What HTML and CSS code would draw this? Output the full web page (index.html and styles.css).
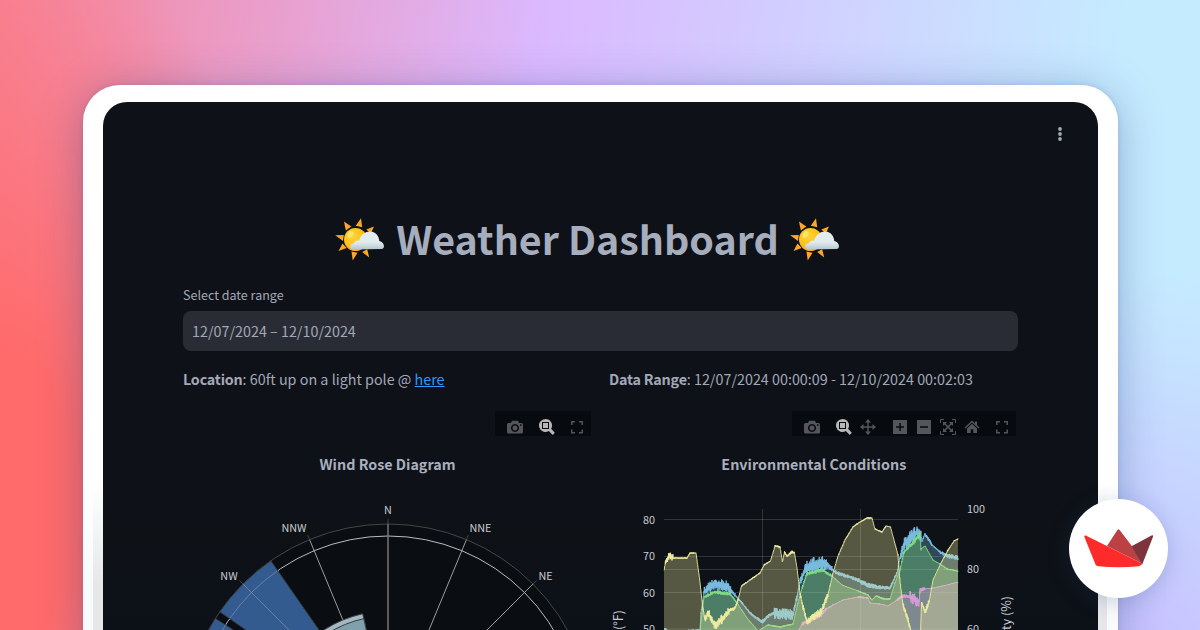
FILE: index.html
```html
<!DOCTYPE html>
<html lang="en">
<head>
<meta charset="utf-8">
<title>Weather Dashboard</title>
<link rel="stylesheet" href="styles.css">
</head>
<body>
<svg class="defs" width="0" height="0" aria-hidden="true">
  <defs>
    <radialGradient id="sunFill" cx=".38" cy=".35" r=".7"><stop offset="0" stop-color="#ffd43b"/><stop offset=".6" stop-color="#fcc21b"/><stop offset="1" stop-color="#ffa21e"/></radialGradient>
    <linearGradient id="cloudFill" x1="0" y1="0" x2="0" y2="1"><stop offset=".6" stop-color="#e2ebee"/><stop offset="1" stop-color="#b4c6cf"/></linearGradient>
    <symbol id="sun" viewBox="0 0 50 44">
      <g fill="#ffa726"><path d="M9 3.500l7.300 5-5.500 4z"/><path d="M26 .2l1.200 9-6.400-1.400z"/><path d="M39 8.500l-3.200 7-4.500-4z"/><path d="M.2 17.200l8.600-.3-.8 6z"/><path d="M3.500 33l4-7.500 4.200 4.500z"/><path d="M17.700 42.500l-1.200-9 6 1.300z"/><path d="M34.200 39.500l-7-5.500 5-2.800z"/></g>
      <circle cx="20.500" cy="21.500" r="11.500" fill="url(#sunFill)"/>
      <ellipse cx="15.500" cy="16.500" rx="2.500" ry="3.800" transform="rotate(35 15.500 16.500)" fill="#ffe36b"/>
      <path d="M19 31.500c-5 0-5.500-5.500-.2-6.200 1-2.700 3.500-3.300 5.200-2.500 1.300-4.800 5-9.300 11-9.300 6.500 0 9 5.500 9.300 9.500 5 1 6.500 7.500 2 8z" fill="url(#cloudFill)"/>
    </symbol>
    <symbol id="camera" viewBox="0 0 16 16"><path fill-rule="evenodd" d="M1.500 4H4l1-2.200h6L12 4h2.500Q16 4 16 5.500V13q0 1.500-1.500 1.500h-13Q0 14.500 0 13V5.500Q0 4 1.500 4zM8 5a4 4 0 1 0 .01 0zM8 6.500a2.500 2.500 0 1 1-.01 0zM13 5.300v1.400h1.500V5.300z"/></symbol>
    <symbol id="zoom" viewBox="0 0 16 16"><path fill-rule="evenodd" d="M6.500 0a6.500 6.500 0 0 1 5.600 9.800l3.700 4-2 2.100-4-3.800A6.500 6.500 0 1 1 6.500 0zM3 3v7h7V3zM4 4h5v5H4z"/></symbol>
    <symbol id="pan" viewBox="0 0 16 16"><path d="M8 0l3 3.500H8.700v3.800h3.800V5L16 8l-3.500 3V8.700H8.700v3.800H11L8 16l-3-3.500h2.300V8.700H3.500V11L0 8l3.500-3v2.300h3.800V3.500H5z"/></symbol>
    <symbol id="plus" viewBox="0 0 16 16"><path fill-rule="evenodd" d="M1 1h14v14H1zM7.300 4v3.300H4v1.500h3.300V12h1.500V8.800H12V7.300H8.800V4z"/></symbol>
    <symbol id="minus" viewBox="0 0 16 16"><path fill-rule="evenodd" d="M1 1h14v14H1zM4 7.300v1.500h8V7.300z"/></symbol>
    <symbol id="autoscale" viewBox="0 0 16 16"><path d="M.5 4V.5H4M12 .5h3.500V4M15.500 12v3.500H12M4 15.500H.5V12" fill="none" stroke="currentColor"/><path d="M4 4l8 8M12 4l-8 8" stroke="currentColor" stroke-width="1.600"/><path d="M3 3h4L3 7zM13 3v4L9 3zM13 13H9l4-4zM3 13V9l4 4z"/></symbol>
    <symbol id="home" viewBox="0 0 16 16"><path d="M8 1.500l3 2.800V2.500h2v3.700l2.500 2.400-1 1L8 3.500 1.500 9.600l-1-1z"/><path d="M8 4.800l5 4.600V14H9.300v-3.700H6.700V14H3V9.400z"/></symbol>
    <symbol id="full" viewBox="0 0 16 16"><path d="M2.800 6V2.800H6M10 2.800h3.200V6M13.200 10.500v3.200H10M6 13.700H2.800v-3.200" fill="none" stroke="currentColor" stroke-width="1.500"/></symbol>
  </defs>
</svg>

<div class="stage">
  <div class="frame">
    <main class="app">
      <header class="topbar">
        <svg class="menu" viewBox="0 0 6 16"><circle cx="3" cy="3" r="1.900"/><circle cx="3" cy="8" r="1.900"/><circle cx="3" cy="13" r="1.900"/></svg>
      </header>
      <h1 class="title"><svg class="sun"><use href="#sun"/></svg><span class="name">Weather Dashboard</span><svg class="sun"><use href="#sun"/></svg></h1>
      <label class="label">Select date range</label>
      <div class="date-input">12/07/2024 – 12/10/2024</div>
      <div class="columns info">
        <p><b>Location</b>: 60ft up on a light pole @ <a class="link">here</a></p>
        <p><b>Data Range</b>: 12/07/2024 00:00:09 - 12/10/2024 00:02:03</p>
      </div>
      <div class="columns">
        <section class="panel">
          <div class="modebar left"><svg class="i"><use href="#camera"/></svg><svg class="i on g16"><use href="#zoom"/></svg><svg class="i g14"><use href="#full"/></svg></div>
          <svg id="rose" class="chart" viewBox="183 436 408 194"></svg>
        </section>
        <section class="panel">
          <div class="modebar right"><svg class="i"><use href="#camera"/></svg><svg class="i on g16"><use href="#zoom"/></svg><svg class="i g8"><use href="#pan"/></svg><svg class="i g16"><use href="#plus"/></svg><svg class="i g8"><use href="#minus"/></svg><svg class="i g8"><use href="#autoscale"/></svg><svg class="i g8"><use href="#home"/></svg><svg class="i g14"><use href="#full"/></svg></div>
          <svg id="env" class="chart" viewBox="609 436 409 194"></svg>
        </section>
      </div>
    </main>
  </div>
  <div class="badge">
    <svg viewBox="0 0 99 99"><path d="M38 47l10.400-16q1.100-1.500 2.200 0L63 47.200 72 64z" fill="#bd4043"/><path d="M62.500 47.300L82.500 36.500q2-.6 1.500 1.300L73 66z" fill="#7d353b"/><path d="M15.300 37.800Q15 36 16.800 36.500L72 64q1.500 1 0 2-.8 1-2.500 1.200-20 2-40 0-2.200-.2-3-1.700z" fill="#ff2b2b"/></svg>
  </div>
</div>
<script src="charts.js"></script>
</body>
</html>
```

FILE: styles.css
```css
* { box-sizing: border-box; }
body { margin: 0; width: 1200px; height: 630px; overflow: hidden; font-family: "Noto Sans CJK SC", "Noto Sans", sans-serif; font-size: 14.33px; color: #a3a8b8; }
.defs { position: absolute; }
.stage {
  position: relative; width: 1200px; height: 630px; overflow: hidden; padding: 85px 82px 0 83px;
  background:
    radial-gradient(ellipse 300px 600px at 0 500px, #ff6b6b 25%, rgba(255,107,107,0) 100%),
    radial-gradient(ellipse 330px 430px at 1130px 700px, #c8c0ff 10%, rgba(200,192,255,0) 100%),
    linear-gradient(100deg, #f7859a 0%, #dbb9ff 42%, #c5ebff 86%);
}
.frame {
  width: 1035px; height: 700px; padding: 17px 20px 0; border-radius: 37px;
  background:
    linear-gradient(#fff 400px, rgba(255,255,255,0) 500px),
    linear-gradient(90deg, #f9fafb 10px, #e5e7e9 10px 1024px, #f9fafb 1024px);
  box-shadow: 0 6px 44px rgba(35,65,125,.34), 0 0 5px rgba(35,65,125,.15);
}
.app { width: 995px; height: 690px; border-radius: 24px 24px 0 0; padding: 0 80px; background: linear-gradient(#0e1117 370px, #0e1217 430px, #0c1118 528px); }
.topbar { display: flex; justify-content: flex-end; height: 113px; padding-top: 24px; margin-right: -45px; }
.menu { width: 6px; height: 16px; fill: #a3a8b8; }
.title { display: flex; align-items: center; justify-content: center; gap: 11px; margin: 0 26px 0 0; height: 50px; font-size: 39.4px; font-weight: 700; line-height: 50px; color: #a6adbc; white-space: nowrap; }
.name { height: 54px; line-height: 50px; }
.sun { width: 50px; height: 44px; }
.label { display: block; margin-top: 20px; height: 20px; line-height: 20px; font-size: 12.54px; }
.date-input { height: 40px; margin-top: 6px; padding: 0 9px; line-height: 40px; border-radius: 8px; background: #292c35; }
.columns { display: grid; grid-template-columns: 408px 409px; gap: 18px; }
.info { height: 60px; padding-top: 17px; }
.info p { margin: 0; line-height: 21px; white-space: nowrap; }
.info b { font-weight: 700; letter-spacing: -.2px; }
.link { color: #2f97ff; text-decoration: underline; }
.modebar { display: flex; align-items: flex-start; height: 25px; padding: 8px 0 0 12px; background: #070a0e; color: #55565a; }
.left { width: 96px; margin-left: 312px; }
.right { width: 224px; margin-left: 183px; }
.i { flex: none; width: 16px; height: 16px; fill: currentColor; }
.on { color: #b7b7b8; }
.g16 { margin-left: 16px; }
.g14 { margin-left: 14px; }
.g8 { margin-left: 8px; }
.chart { display: block; width: 100%; height: 194px; }
.heading { font-size: 14.33px; font-weight: 700; fill: #a9afbf; }
.tick { font-size: 10.8px; fill: #c7cad0; }
.axis { font-size: 12.5px; fill: #c7cad0; }
.badge { position: absolute; left: 1069px; top: 499px; width: 99px; height: 99px; border-radius: 50%; background: #fff; box-shadow: 0 4px 22px rgba(35,65,125,.22); }
```

FILE: charts.js
```javascript
const NS = 'http://www.w3.org/2000/svg';
function add(parent, tag, attrs, text) {
  const el = document.createElementNS(NS, tag);
  for (const k in attrs) el.setAttribute(k, attrs[k]);
  if (text) el.textContent = text;
  parent.appendChild(el);
  return el;
}
function label(svg, x, y, text, cls, anchor, extra) {
  return add(svg, 'text', Object.assign({ x, y, class: cls, 'text-anchor': anchor || 'middle' }, extra || {}), text);
}

// Wind rose
const rose = document.getElementById('rose');
const CX = 388, CY = 729, R = 205;
const polar = (deg, r) => {
  const a = deg * Math.PI / 180;
  return [CX + r * Math.sin(a), CY - r * Math.cos(a)];
};
label(rose, 387.5, 470, 'Wind Rose Diagram', 'heading');
add(rose, 'circle', { cx: CX, cy: CY, r: R, fill: '#0a0e12', stroke: '#454545' });
add(rose, 'circle', { cx: CX, cy: CY, r: 193, fill: 'none', stroke: '#b9bbbc' });
for (let d = -90; d <= 90; d += 22.5) {
  const [x1, y1] = polar(d, R), [x2, y2] = polar(d, R + 5);
  add(rose, 'line', { x1: CX, y1: CY, x2: x1, y2: y1, stroke: d === 0 ? '#777679' : '#aaacae', 'stroke-width': d === 0 ? 1.5 : 0.9 });
  add(rose, 'line', { x1, y1, x2, y2, stroke: '#454545' });
}
function wedge(mid, r, fill) {
  const [ax, ay] = polar(mid - 10.125, r), [bx, by] = polar(mid + 10.125, r);
  add(rose, 'path', { d: `M${CX} ${CY}L${ax} ${ay}A${r} ${r} 0 0 1 ${bx} ${by}Z`, fill, stroke: '#363c42' });
}
wedge(-45, R, '#345b8f');
wedge(-67.5, R, '#345b8f');
wedge(-22.5, 118, '#a5b8bf');
wedge(-22.5, 113, '#80a0ad');
const [gx, gy] = polar(-45, R);
add(rose, 'line', { x1: CX, y1: CY, x2: gx, y2: gy, stroke: '#7892b5', 'stroke-width': 0.7 });
[-45, -67.5].forEach(m => {
  const a = polar(m - 10, 193), b = polar(m + 10, 193);
  add(rose, 'path', { d: `M${a}A193 193 0 0 1 ${b}`, fill: 'none', stroke: '#7892b5', 'stroke-width': 0.7 });
});
[['N', 388, 514], ['NNW', 294, 532], ['NNE', 480.5, 532], ['NW', 229, 580], ['NE', 545.5, 580]]
  .forEach(t => label(rose, t[1], t[2], t[0], 'tick'));

// Environmental conditions
const env = document.getElementById('env');
label(env, 813.8, 470, 'Environmental Conditions', 'heading');
let seed = 17;
const rnd = () => { seed = (seed * 16807) % 2147483647; return seed / 2147483647; };
// Each point: x, y and the noise amplitude up to the next point
function series(pts, color, fillOpacity) {
  const out = [];
  let sign = 1;
  for (let i = 0; i < pts.length - 1; i++) {
    const [x0, y0, n = 0.4] = pts[i], [x1, y1] = pts[i + 1];
    for (let x = x0; x < x1; x += 0.33) {
      sign = -sign;
      out.push([x.toFixed(2), (y0 + (y1 - y0) * (x - x0) / (x1 - x0) + sign * (0.25 + 0.75 * rnd()) * n).toFixed(1)]);
    }
  }
  out.push([958, pts[pts.length - 1][1]]);
  const line = 'M' + out.join('L');
  add(env, 'path', { d: `${line}L958 660L${pts[0][0]} 660Z`, fill: color, 'fill-opacity': fillOpacity });
  add(env, 'path', { d: line, fill: 'none', stroke: color, 'stroke-width': 1, 'stroke-opacity': 0.9, 'stroke-linejoin': 'bevel' });
}
function grid(opacity) {
  [519.5, 556.5, 569.5, 592.5, 629].forEach(y => add(env, 'line', { x1: 664, y1: y, x2: 958, y2: y, stroke: '#fff', 'stroke-opacity': opacity }));
  [762.5, 860.5].forEach(x => add(env, 'line', { x1: x, y1: 509, x2: x, y2: 630, stroke: '#fff', 'stroke-opacity': opacity }));
}
grid(0.1);
series([[664,632,2],[665,629,2],[668,632,1],[700,630],[701,613,2],[704,592,5],[709,587,6],[715,584,6],[727,586,5],[731,591,2],[735,595,1],[742,603,1.2],[750,613,1.6],[762,622,2],[768,616,2],[774,613,6],[793,615,3.5],[797,597,2],[800,582,4],[805,570,8],[813,565,8],[823,564,6],[828,565,3],[832,569,1],[835,572,2],[858,580,2.5],[867,585,2.5],[877,587,2],[890,588,2],[897,573,2],[900,558,5],[904,544,7],[910,538,7],[917,532,6],[921,536,1],[922,541,1],[925,534,2],[932,545,1],[940,552,2],[948,556,2.5],[958,558]], '#79bde0', 0.32);
series([[664,650],[700,632],[701,622],[704,597,2],[715,592,2],[730,594,1],[737,603],[747,618],[758,631],[768,625,.8],[780,627,.8],[793,624],[798,603],[802,588,2],[807,574,2],[815,572,2],[822,570,1.6],[832,576],[842,585],[858,591,.7],[868,595,.7],[872,600],[876,596,1],[884,599,1],[890,599],[895,583],[900,570,2],[904,552,2],[912,544,3],[920,534,2],[921,549],[925,546],[933,560],[940,564,.7],[947,569,.7],[958,571]], '#7ddb82', 0.36);
series([[794,640],[802,624,2],[807,622,3],[822,614,2],[826,609,.8],[833,605],[843,600],[858,597,1],[868,598],[870,603],[880,604],[888,606],[897,600,2],[903,596,2],[910,597,6],[919,602,4],[920,590,2],[925,589],[933,588],[947,585],[958,582]], '#d79bd8', 0.36);
series([[664,571,2],[665.5,562,4],[670,555,4],[673,558,.8],[687,558,.8],[690,553,.8],[696,553],[699.5,578],[702.5,605,2],[705,620,4],[708,613,5],[715,625,5],[722,619,4],[729,611,2],[735,608,1.5],[738,600,.8],[741.5,586,.8],[750,580,.8],[760,573,.8],[764,565,.8],[770.5,561,.8],[775,546,1],[780,547,1],[782.5,562,1],[784.5,552,1.5],[787,556,1.5],[792,552,1.5],[794.5,553],[797,568],[800,593,2],[803,607,3],[807,622,4],[813,617,4],[821,612,3.5],[828,595,1],[833,573,.8],[838,556,.8],[845,540,.8],[853,527,.8],[860,522,.8],[867,518,.8],[872,518],[875,529,.8],[882,532,.8],[886,526],[890.5,527],[894,540,.8],[898,555,.8],[899.5,577,2],[903,605,3],[908,620,3],[912,635,2],[920.5,635],[921.5,602,2],[925,612,3],[929,602],[933,580],[940,565,.7],[948,550,.7],[954,541,.7],[958,539]], '#f0eca0', 0.32);
grid(0.05);
label(env, 655, 524, '80', 'tick', 'end');
label(env, 655, 560, '70', 'tick', 'end');
label(env, 655, 596.5, '60', 'tick', 'end');
label(env, 655, 633, '50', 'tick', 'end');
label(env, 967, 513, '100', 'tick', 'start');
label(env, 967, 573, '80', 'tick', 'start');
label(env, 967, 633, '60', 'tick', 'start');
label(env, 0, 0, 'Temperature (°F)', 'axis', 'end', { transform: 'translate(623 610) rotate(-90)' });
label(env, 0, 0, 'Humidity (%)', 'axis', 'end', { transform: 'translate(1010.5 596) rotate(-90)' });
```
